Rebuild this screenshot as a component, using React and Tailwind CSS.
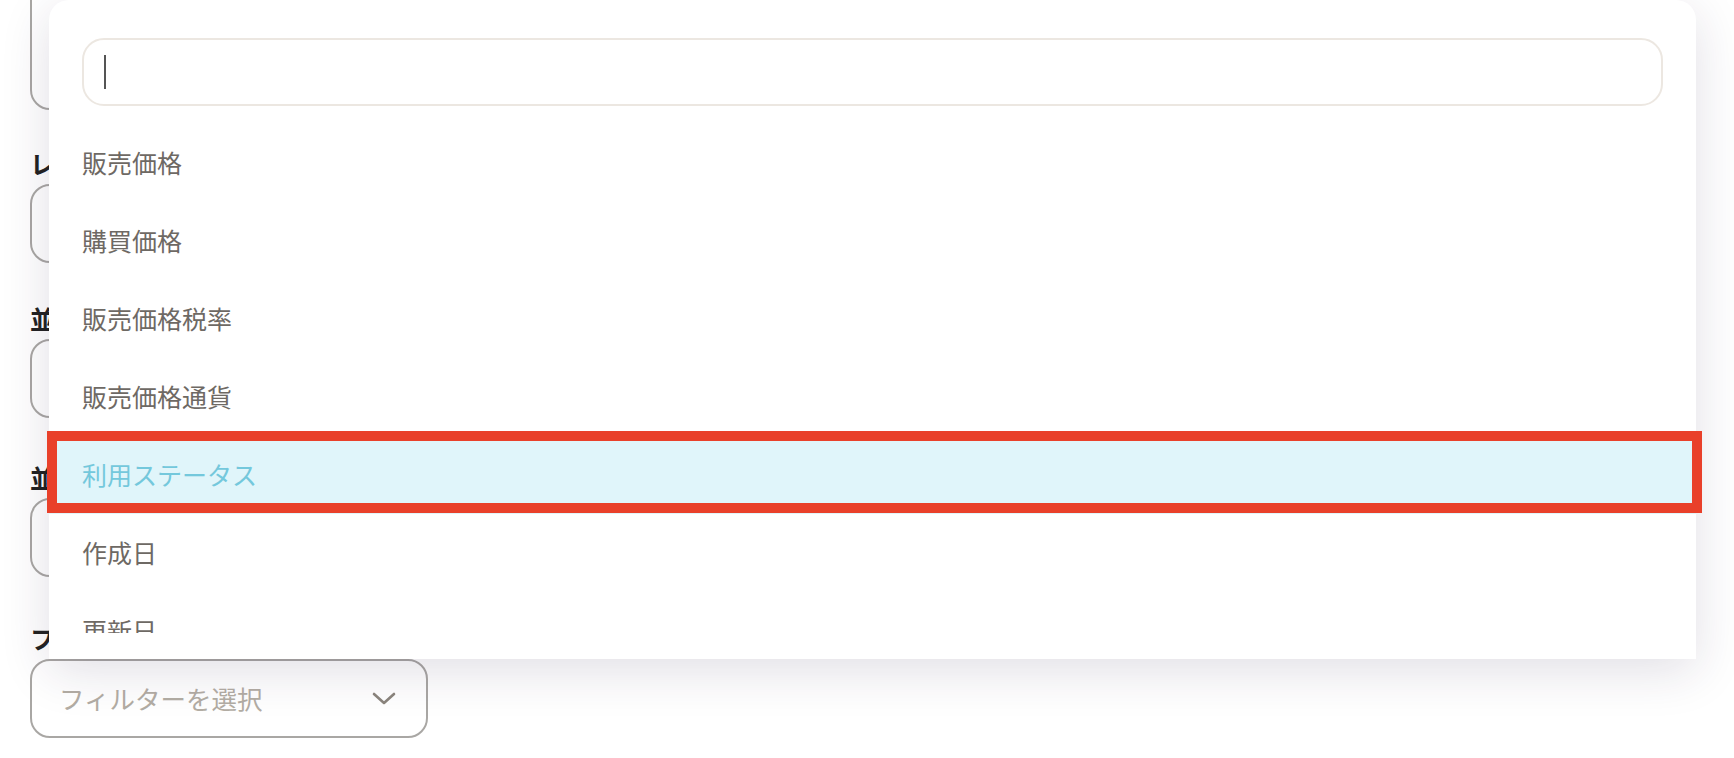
const FIELDS = [
  { label: 'レコード取得件数', gap: 'mt-[36px]' },
  { label: '並び替えの基準', gap: 'mt-[38px]' },
  { label: '並び替えの順序', gap: 'mt-[42px]' },
];

const OPTIONS = [
  '販売価格',
  '購買価格',
  '販売価格税率',
  '販売価格通貨',
  '利用ステータス',
  '作成日',
  '更新日',
];

const SELECTED = '利用ステータス';

function FieldLabel({ className = '', children }) {
  return (
    <div className={`${className} mb-[4px] h-[34px] leading-[34px] text-[25px] font-bold text-[#222222]`}>
      {children}
    </div>
  );
}

function Chevron() {
  return (
    <svg width="24" height="14" viewBox="0 0 24 14" fill="none">
      <polyline points="2,2 12,11 22,2" stroke="#8b857d" strokeWidth="2.6" strokeLinecap="round" strokeLinejoin="round" />
    </svg>
  );
}

export default function App() {
  return (
    <div
      className="relative h-[758px] w-full overflow-hidden bg-white"
      style={{ fontFamily: '"Noto Sans CJK JP", "Noto Sans", sans-serif' }}
    >
      {/* form behind the dropdown */}
      <div className="flex w-[1560px] flex-col px-[30px]">
        <div className="mt-[-50px] h-[160px] w-full rounded-[20px] border-2 border-[#a9a7a4] bg-white" />
        {FIELDS.map((f) => (
          <div key={f.label}>
            <FieldLabel className={f.gap}>{f.label}</FieldLabel>
            <div className="h-[79px] w-full rounded-[20px] border-2 border-[#a9a7a4] bg-white" />
          </div>
        ))}
        <FieldLabel className="mt-[44px]">フィルター</FieldLabel>
        <div className="flex h-[79px] w-[398px] items-center justify-between rounded-[20px] border-2 border-[#a9a7a4] bg-white pl-[27px] pr-[30px]">
          <span className="text-[25.5px] text-[#b3ada4]">フィルターを選択</span>
          <Chevron />
        </div>
      </div>

      {/* dropdown panel */}
      <div className="absolute left-[49px] top-0 flex h-[659px] w-[1647px] flex-col rounded-t-[20px] bg-white shadow-[0_12px_50px_rgba(40,30,70,0.14)]">
        <div className="mx-[33px] mt-[38px] flex h-[68px] items-center rounded-[22px] border-2 border-[#ece7e1] pl-[20px]">
          <span className="block h-[34px] w-[2px] bg-[#555555]" />
        </div>
        <div className="mt-[18px] h-[509px] overflow-hidden">
          {OPTIONS.map((opt) => {
            const active = opt === SELECTED;
            return (
              <div
                key={opt}
                className={
                  active
                    ? 'flex h-[78px] items-center bg-[#e0f5fa] px-[33px] text-[25px] text-[#74c8dc]'
                    : 'flex h-[78px] items-center px-[33px] text-[25px] text-[#6e6964]'
                }
              >
                {opt}
              </div>
            );
          })}
        </div>
      </div>

      {/* annotation box */}
      <div className="absolute left-[47px] top-[431px] h-[82px] w-[1655px] border-[10px] border-[#e9402a]" />
    </div>
  );
}
